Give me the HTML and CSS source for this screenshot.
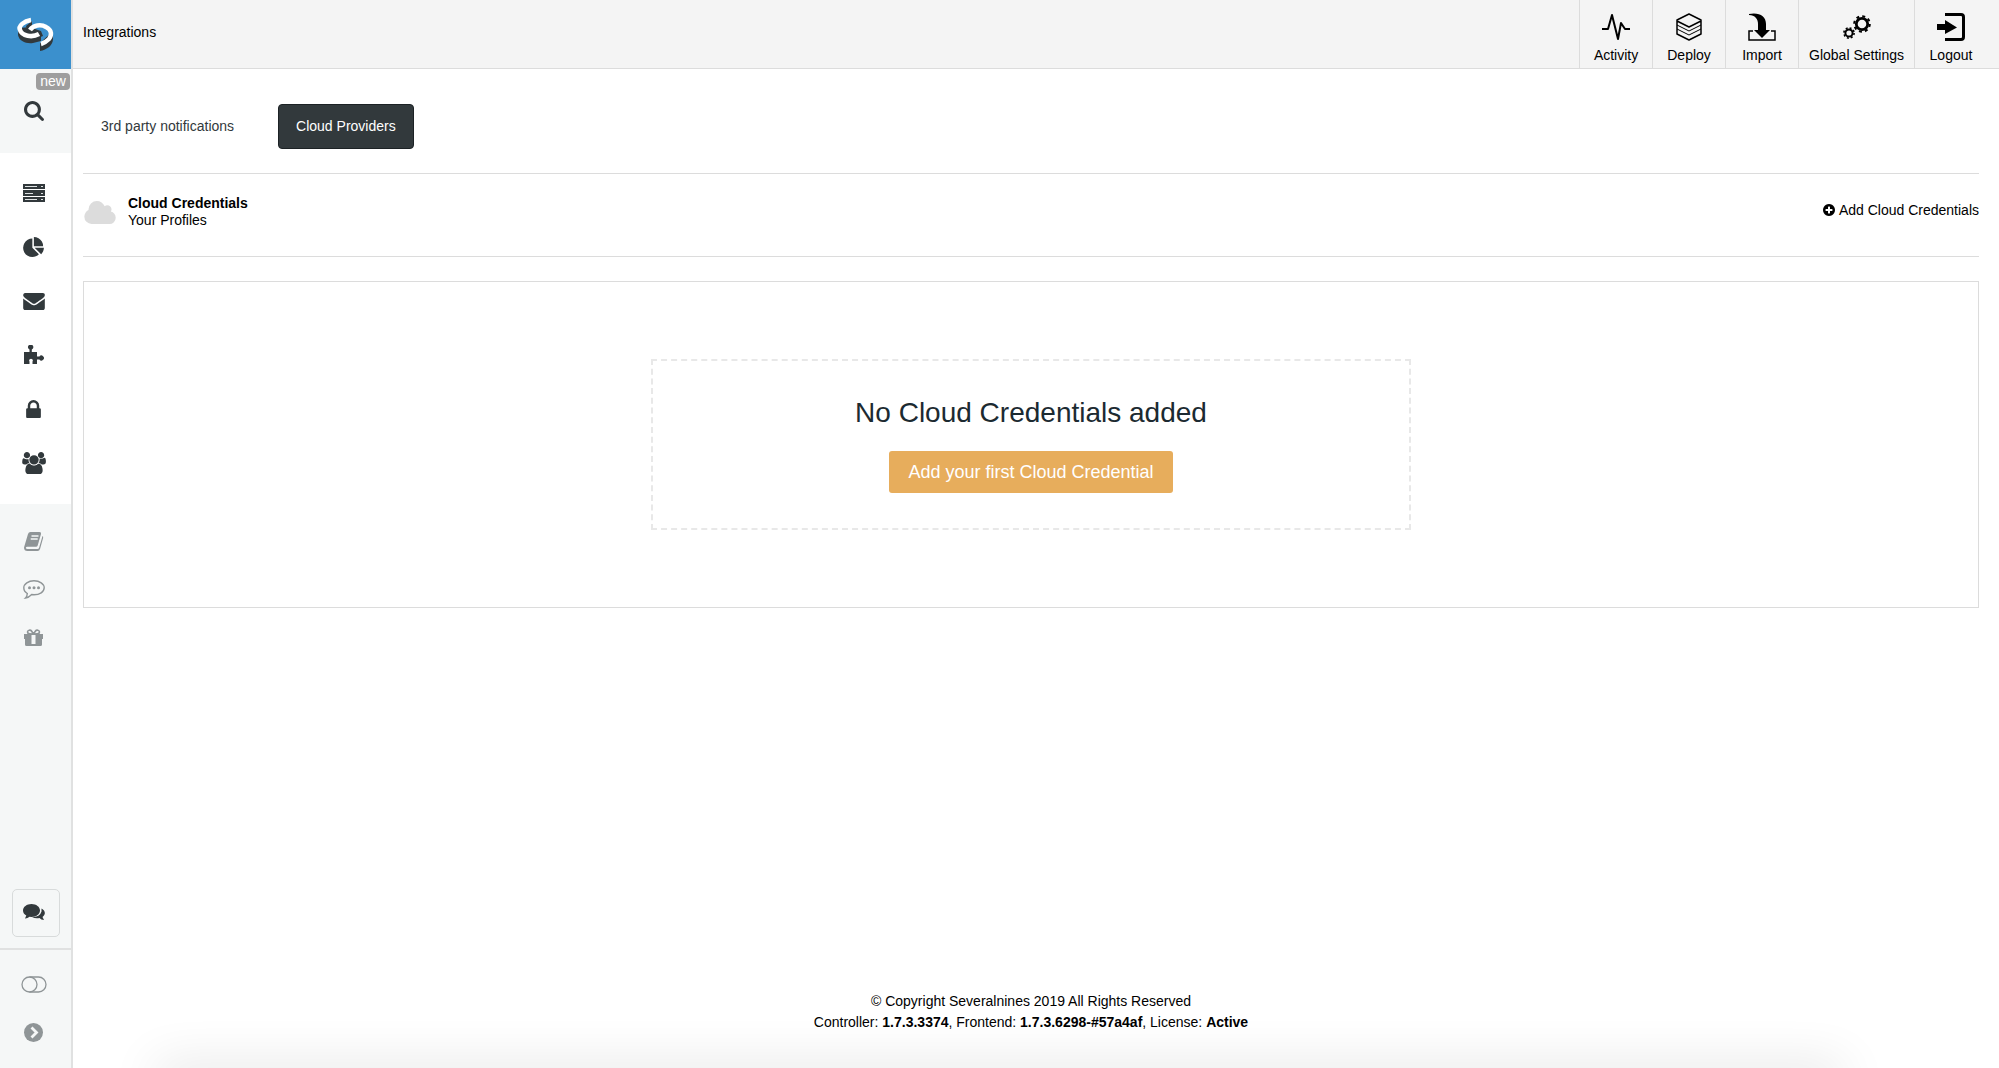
FILE: index.html
```html
<!DOCTYPE html>
<html lang="en">
<head>
<meta charset="utf-8">
<title>Integrations</title>
<link rel="stylesheet" href="styles.css">
</head>
<body>
<div class="app">
  <aside class="sidebar">
    <a class="logo" href="#" aria-label="Home">
      <svg width="44" height="42" viewBox="0 0 44 42" fill="none">
        <path d="M4 14v7c1 6 8 9 15 8l8-2v-8l-9-6z" fill="#32393c"/>
        <path d="M12 12l6-5v7l-4 5zM26 29v8c7-1 13-6 13-12v-8z" fill="#32393c"/>
        <path d="M17 18l4-3 6 2 2 5-5 2-5-3z" fill="#32393c"/>
        <path d="M17 6C10 7 4 12 6 16c2 6 12 8 19 4" stroke="#fff" stroke-width="4.500"/>
        <path d="M16 16c3-5 11-6 16-3 6 3 6 8 3 12-2 2-4 4-8 5" stroke="#fff" stroke-width="4.500"/>
      </svg>
    </a>
    <div class="search-block">
      <span class="badge">new</span>
      <button class="side-item" aria-label="Search">
        <svg width="20" height="20" viewBox="64 128 1664 1664"><path d="M1216 832q0-185-131.500-316.500t-316.500-131.500-316.500 131.500-131.500 316.500 131.500 316.500 316.500 131.500 316.500-131.500 131.500-316.500zm512 832q0 52-38 90t-90 38q-54 0-90-38l-343-342q-179 124-399 124-143 0-273.500-55.500t-225-150-150-225-55.500-273.500 55.500-273.500 150-225 225-150 273.500-55.500 273.500 55.500 225 150 150 225 55.500 273.500q0 220-124 399l343 343q37 37 37 90z"/></svg>
      </button>
    </div>
    <nav class="side-main" aria-label="Main">
      <a class="side-item" href="#" aria-label="Clusters">
        <svg width="22" height="18" viewBox="0 0 22 18"><path d="M0 0h22v5H0zM0 6h22v6H0zM0 13h22v5H0z"/><path d="M2 2h12v1H2zM2 9h8v1H2zM2 15h12v1H2zM18 2h2v1h-2zM18 9h2v1h-2zM18 15h2v1h-2z" fill="#dfe3e4"/></svg>
      </a>
      <a class="side-item" href="#" aria-label="Reports">
        <svg width="21" height="20" viewBox="0 0 1728 1664"><path d="M768 890l546 546q-106 108-247.500 168t-298.500 60q-209 0-385.500-103t-279.500-279.500-103-385.500 103-385.500 279.500-279.500 385.500-103v762zm187 6h773q0 157-60 298.500t-168 247.500zm709-128h-768v-768q209 0 385.500 103t279.500 279.500 103 385.500z"/></svg>
      </a>
      <a class="side-item" href="#" aria-label="Messages">
        <svg width="22" height="17" viewBox="0 256 1792 1408"><path d="M1792 710v794q0 66-47 113t-113 47h-1472q-66 0-113-47t-47-113v-794q44 49 101 87 362 246 497 345 57 42 92.500 65.500t94.500 48 110 24.500h2q51 0 110-24.500t94.500-48 92.500-65.500q170-123 498-345 57-39 100-87zm0-294q0 79-49 151t-122 123q-376 261-468 325-10 7-42.500 31t-54 38.500-52 32.500-57.500 27-50 9h-2q-23 0-50-9t-57.500-27-52-32.500-54-38.500-42.500-31q-91-64-262-182.500t-205-142.500q-62-42-117-115.500t-55-136.500q0-78 41.500-130t118.500-52h1472q65 0 112.500 47t47.500 113z"/></svg>
      </a>
      <a class="side-item" href="#" aria-label="Integrations">
        <svg width="21" height="20" viewBox="0 0 21 20"><path d="M1 7h5.500V4.600A2.700 2.700 0 1 1 8.800 4.600V7H14v4.500h2.400a2.500 2.500 0 1 1 0 3H14V19H9.500v-2.500a1.800 1.800 0 1 0-3 0V19H1z"/></svg>
      </a>
      <a class="side-item" href="#" aria-label="Keys">
        <svg width="15" height="18" viewBox="320 128 1152 1408"><path d="M640 768h512v-192q0-106-75-181t-181-75-181 75-75 181v192zm832 96v576q0 40-28 68t-68 28h-960q-40 0-68-28t-28-68v-576q0-40 28-68t68-28h32v-192q0-184 132-316t316-132 316 132 132 316v192h32q40 0 68 28t28 68z"/></svg>
      </a>
      <a class="side-item" href="#" aria-label="Users">
        <svg width="24" height="22" viewBox="0 0 1920 1792"><path d="M593 896q-162 5-265 128h-134q-82 0-138-40.500t-56-118.500q0-353 124-353 6 0 43.500 21t97.500 42.500 119 21.500q67 0 133-23-5 37-5 66 0 159 93 294zm1071 637q0 120-73 189.500t-194 69.500h-874q-121 0-194-69.500t-73-189.500q0-53 3.500-103.500t14-109 26.500-108.500 43-97.500 62-81 85.500-53.500 111.500-20q10 0 43 21.500t73 48 107 48 135 21.500 135-21.500 107-48 73-48 43-21.500q61 0 111.500 20t85.500 53.500 62 81 43 97.500 26.500 108.500 14 109 3.500 103.500zm-1024-1277q0 106-75 181t-181 75-181-75-75-181 75-181 181-75 181 75 75 181zm704 384q0 159-112.500 271.500t-271.500 112.500-271.500-112.500-112.500-271.500 112.500-271.500 271.500-112.500 271.500 112.500 112.500 271.500zm576 225q0 78-56 118.500t-138 40.500h-134q-103-123-265-128 93-135 93-294 0-29-5-66 66 23 133 23 59 0 119-21.500t97.500-42.500 43.500-21q124 0 124 353zm-128-609q0 106-75 181t-181 75-181-75-75-181 75-181 181-75 181 75 75 181z"/></svg>
      </a>
    </nav>
    <nav class="side-help" aria-label="Help">
      <a class="side-item" href="#" aria-label="Documentation">
        <svg width="20" height="19" viewBox="0 0 20 19"><path d="M6.500 0H15.500q2 0 1.500 2l-3.300 11.500q-.4 1.300-1.700 1.300H3q-1.300.2-1.200 1.200.3 1 1.700 1H13.500q1.200 0 1.600-1.200L18.500 4q1 .7.600 2l-3 10.800Q15.500 19 13.500 19h-10Q0 19 0 15.500L4 2Q4.600 0 6.500 0z"/><path d="M7.500 4h7M6.700 7h7" fill="none" stroke="#f5f7f7" stroke-width="1.300"/></svg>
      </a>
      <a class="side-item" href="#" aria-label="Feedback">
        <svg width="22" height="19" viewBox="0 0 22 19"><path d="M11 .8c5.600 0 10.200 3 10.200 7s-4.600 7-10.200 7l-2.300-.2C7 16.400 5 17.800 2.500 18c1.200-1.100 1.700-2.600 1.800-4.500C2 12.200.8 10 .8 7.800c0-4 4.600-7 10.200-7z" fill="none" stroke="#8f9597" stroke-width="1.400"/><circle cx="6.500" cy="7.800" r="1.500"/><circle cx="11" cy="7.800" r="1.500"/><circle cx="15.500" cy="7.800" r="1.500"/></svg>
      </a>
      <a class="side-item" href="#" aria-label="What's new">
        <svg width="19" height="17" viewBox="0 0 19 17"><path d="M0 5h19v5h-1v5.500q0 1.500-1.500 1.500h-14Q1 17 1 15.500V10H0z"/><path d="M7.500 6h4v9h-4z" fill="#f5f7f7"/><path d="M9.500 5L7.500 2C6.500.5 3.500 1 3.500 3s2 2 6 2L11.500 2c1-1.500 4-1 4 1s-2 2-6 2" fill="none" stroke="#8f9597" stroke-width="1.600"/></svg>
      </a>
    </nav>
    <div class="side-chat">
      <button class="chat-button" aria-label="Chat">
        <svg width="22" height="18" viewBox="0 0 22 18"><path d="M18.500 4.500c4 2 4.500 6 1 8.500l1.500 3q-3 0-4.500-2-4 1-7.500-1 8 0 9.500-5.500z"/><path d="M8.500 0C13.200 0 17 2.900 17 6.500S13.200 13 8.500 13l-2-.2Q4.500 14.700 2 14.600l1.300-3C1.200 10.400 0 8.600 0 6.500 0 2.900 3.800 0 8.500 0z"/></svg>
      </button>
    </div>
    <div class="side-bottom">
      <button class="side-item" aria-label="Toggle view">
        <svg width="26" height="17" viewBox="0 0 26 17" fill="none" stroke="#8f9597" stroke-width="1.300"><rect x="1" y="1" width="24" height="15" rx="7.500"/><path d="M8.500 1a7.500 7.500 0 0 1 0 15"/></svg>
      </button>
      <button class="side-item" aria-label="Expand menu">
        <svg width="19" height="19" viewBox="0 0 19 19"><circle cx="9.500" cy="9.500" r="9.500"/><path d="M7.500 4.500l5 5-5 5" fill="none" stroke="#f5f7f7" stroke-width="2.800"/></svg>
      </button>
    </div>
  </aside>

  <div class="page">
    <header class="topbar">
      <h1 class="title">Integrations</h1>
      <nav class="actions" aria-label="Actions">
        <a class="action" href="#">
          <svg width="28" height="28" viewBox="0 0 28 28" fill="none" stroke="#000" stroke-width="2" stroke-linejoin="round"><path d="M0 16h6L10 2l6 24 3-16 4 6h5"/></svg>
          Activity</a>
        <a class="action" href="#">
          <svg width="28" height="28" viewBox="0 0 28 28" fill="none" stroke="#000" stroke-width="1.500" stroke-linejoin="round"><path d="M14 1l12 6v14l-12 6-12-6V7zM2 8l12 6 12-6"/><path d="M2 12l12 6 12-6M2 16l12 6 12-6" stroke-width="1"/></svg>
          Deploy</a>
        <a class="action" href="#">
          <svg width="28" height="28" viewBox="0 0 28 28"><path d="M1 1c10-2 17 2 17 10v6h4l-8 8-8-8h4v-6C10 6 7 2 1 2z"/><path d="M5 18H1v9h26v-9h-4" fill="none" stroke="#000" stroke-width="1.500"/></svg>
          Import</a>
        <a class="action" href="#">
          <svg width="28" height="28" viewBox="0 0 28 28" fill="none" stroke="#000"><circle cx="19" cy="11" r="5.700" stroke-width="2.800"/><circle cx="19" cy="11" r="7.800" stroke-width="2" stroke-dasharray="3 3.126"/><circle cx="6" cy="20" r="3.600" stroke-width="2"/><circle cx="6" cy="20" r="5.100" stroke-width="1.600" stroke-dasharray="2 2.005"/></svg>
          Global Settings</a>
        <a class="action" href="#">
          <svg width="28" height="28" viewBox="0 0 28 28"><path d="M0 11h8V7l12 7.500L8 21v-4H0z"/><path d="M8 1.500h16q2.500 0 2.500 2.500v20q0 2.500-2.500 2.500H8" fill="none" stroke="#000" stroke-width="3"/></svg>
          Logout</a>
      </nav>
    </header>

    <main class="content">
      <nav class="tabs" aria-label="Integration types">
        <button class="tab">3rd party notifications</button>
        <button class="tab tab-active">Cloud Providers</button>
      </nav>
      <section class="profiles">
        <svg width="33" height="23" viewBox="0 128 1984 1408" fill="#dcdcdc"><path d="M1984 1152q0 159-112.500 271.500t-271.500 112.500h-1088q-185 0-316.500-131.500t-131.500-316.500q0-132 71-241.500t187-163.500q-2-28-2-43 0-212 150-362t362-150q158 0 286.500 88t187.500 230q70-62 166-62 106 0 181 75t75 181q0 75-41 138 129 30 213 134.500t84 239.500z"/></svg>
        <div class="profiles-text">
          <h2 class="profiles-title">Cloud Credentials</h2>
          <p class="profiles-sub">Your Profiles</p>
        </div>
        <a class="add-link" href="#">
          <svg width="12" height="12" viewBox="128 128 1536 1536"><path d="M1344 960v-128q0-26-19-45t-45-19h-256v-256q0-26-19-45t-45-19h-128q-26 0-45 19t-19 45v256h-256q-26 0-45 19t-19 45v128q0 26 19 45t45 19h256v256q0 26 19 45t45 19h128q26 0 45-19t19-45v-256h256q26 0 45-19t19-45zm320-64q0 209-103 385.500t-279.500 279.500-385.500 103-385.500-103-279.500-279.500-103-385.500 103-385.500 279.500-279.500 385.500-103 385.500 103 279.500 279.500 103 385.500z"/></svg>
          Add Cloud Credentials</a>
      </section>
      <section class="panel">
        <div class="empty">
          <p class="empty-title">No Cloud Credentials added</p>
          <button class="primary">Add your first Cloud Credential</button>
        </div>
      </section>
    </main>

    <footer class="footer">
      <p>© Copyright Severalnines 2019 All Rights Reserved</p>
      <p>Controller: <b>1.7.3.3374</b>, Frontend: <b>1.7.3.6298-#57a4af</b>, License: <b>Active</b></p>
    </footer>
  </div>
</div>
<div class="bottom-shade"></div>
</body>
</html>
```

FILE: styles.css
```css
* {
  box-sizing: border-box;
}

body,
h1,
h2,
p {
  margin: 0;
}

body {
  font: 14px/17px "Liberation Sans", Arial, sans-serif;
  color: #000;
  background: #fff;
}

button {
  font: inherit;
  border: 0;
  background: none;
  padding: 0;
}

a {
  color: inherit;
  text-decoration: none;
}

svg {
  display: block;
  flex: none;
}

.app {
  display: flex;
  min-height: 100vh;
}

/* Sidebar */

.sidebar {
  flex: none;
  width: 73px;
  display: flex;
  flex-direction: column;
  background: #f5f7f7;
  border-right: 2px solid #e0e1e1;
  fill: #32393c;
}

.logo {
  height: 69px;
  display: flex;
  align-items: center;
  justify-content: center;
  background: #3b90cd;
}

.side-item {
  width: 67px;
  height: 54px;
  display: flex;
  align-items: center;
  justify-content: center;
}

.search-block {
  position: relative;
  height: 84px;
  padding-top: 15px;
}

.badge {
  position: absolute;
  top: 4px;
  right: 1px;
  width: 34px;
  border-radius: 4px;
  background: #9e9e9e;
  color: #fff;
  text-align: center;
}

.side-main {
  display: flex;
  flex-direction: column;
  padding: 13px 0 14px;
  background: #fff;
}

.side-help {
  padding-top: 13px;
  fill: #8f9597;
}

.side-help .side-item {
  height: 48px;
}

.side-chat {
  margin-top: auto;
  padding: 0 12px 11px;
  border-bottom: 2px solid #e0e1e1;
}

.chat-button {
  width: 48px;
  height: 48px;
  display: flex;
  align-items: center;
  padding-left: 10px;
  border: 1px solid #d8dbdb;
  border-radius: 5px;
}

.side-bottom {
  padding: 10px 0 12px;
  fill: #8f9597;
}

.side-bottom .side-item {
  height: 48px;
}

/* Top bar */

.page {
  flex: 1;
  min-width: 0;
  display: flex;
  flex-direction: column;
}

.topbar {
  display: flex;
  justify-content: space-between;
  background: #f4f4f4;
  border-bottom: 1px solid #dcdcdc;
}

.title {
  padding: 24px 10px 0;
  font-size: 14px;
  line-height: 17px;
  font-weight: 400;
}

.actions {
  display: flex;
  padding-right: 12px;
}

.action {
  min-width: 73px;
  height: 68px;
  padding: 13px 10px 0;
  display: flex;
  flex-direction: column;
  align-items: center;
  gap: 6px;
  border-left: 1px solid #dcdcdc;
}

/* Content */

.content {
  flex: 1;
  padding: 35px 20px 20px 10px;
}

.tabs {
  display: flex;
  gap: 26px;
  padding-bottom: 24px;
  border-bottom: 1px solid #dcdcdc;
}

.tab {
  height: 45px;
  padding: 0 17px;
  border: 1px solid transparent;
  border-radius: 4px;
  color: #32393c;
}

.tab-active {
  background: #32393c;
  border-color: #1c2225;
  color: #fff;
}

.profiles {
  display: flex;
  align-items: center;
  gap: 12px;
  padding: 21px 0 27px;
  border-bottom: 1px solid #dcdcdc;
}

.profiles-title {
  font-size: 14px;
  line-height: 17px;
}

.add-link {
  display: flex;
  align-items: center;
  gap: 4px;
  margin-left: auto;
  padding-bottom: 4px;
}

.panel {
  margin-top: 24px;
  padding: 77px 0;
  border: 1px solid #dcdcdc;
}

.empty {
  width: 760px;
  max-width: 100%;
  margin: 0 auto;
  padding: 35px 20px;
  display: flex;
  flex-direction: column;
  align-items: center;
  gap: 21px;
  border: 2px dashed #e8e8e8;
}

.empty-title {
  font-size: 28px;
  line-height: 34px;
  color: #1c2a31;
}

.primary {
  height: 42px;
  padding: 0 19px;
  border-radius: 3px;
  background: #e7ad5c;
  color: #fff;
  font-size: 18px;
}

.footer {
  padding: 0 20px 35px 10px;
  line-height: 21px;
  text-align: center;
}

/* Soft shade that rises from the window's lower edge */

.bottom-shade {
  position: fixed;
  left: 156px;
  right: 156px;
  bottom: -20px;
  height: 20px;
  box-shadow: 0 0 50px rgba(0, 0, 0, 0.16);
  pointer-events: none;
}
```
